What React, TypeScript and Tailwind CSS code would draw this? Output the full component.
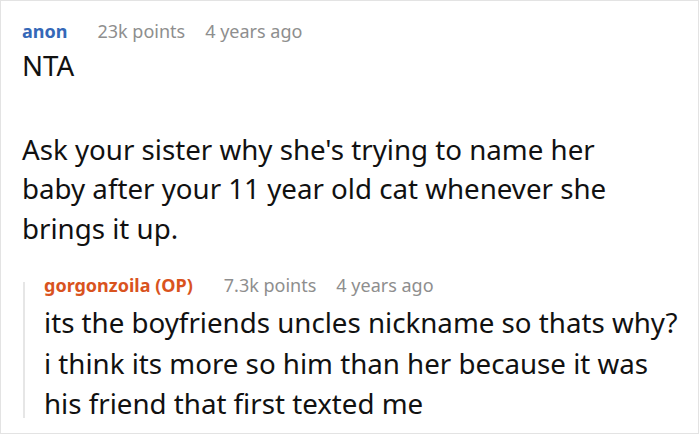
export default function App() {
  const font = { fontFamily: '"Noto Sans", "Open Sans", sans-serif' };

  return (
    <div className="w-[700px] h-[436px] bg-white overflow-hidden" style={font}>
      <div className="w-[699px] h-[434px] border border-[#e3e3e3] pl-[21px] pt-[17px]">
        <div className="flex items-center text-[18px] leading-[26px]">
          <span className="font-bold text-[#3568b8]">anon</span>
          <span className="ml-[30px] text-[#8e8e8e]">23k points</span>
          <span className="ml-[20px] text-[#8e8e8e]">4 years ago</span>
        </div>
        <div className="w-[638px] text-[27.7px] leading-[39.6px] text-[#111] mt-[2px]">
          <p>NTA</p>
          <p className="mt-[44px]">
            Ask your sister why she's trying to name her baby after your 11 year old cat whenever she
            brings it up.
          </p>
        </div>

        <div className="mt-[24px] ml-[1px] flex">
          <div className="w-[2px] bg-[#e6e6e6] mt-[10px] mb-[6px]" />
          <div className="pl-[19px]">
            <div className="flex items-center text-[18px] leading-[26px]">
              <span className="font-bold text-[#d9531e]">gorgonzoila (OP)</span>
              <span className="ml-[31px] text-[#8e8e8e]">7.3k points</span>
              <span className="ml-[20px] text-[#8e8e8e]">4 years ago</span>
            </div>
            <p className="w-[638px] text-[27.7px] leading-[40.5px] text-[#111] mt-[4px]">
              its the boyfriends uncles nickname so thats why? i think its more so him than her
              because it was his friend that first texted me
            </p>
          </div>
        </div>
      </div>
    </div>
  );
}
